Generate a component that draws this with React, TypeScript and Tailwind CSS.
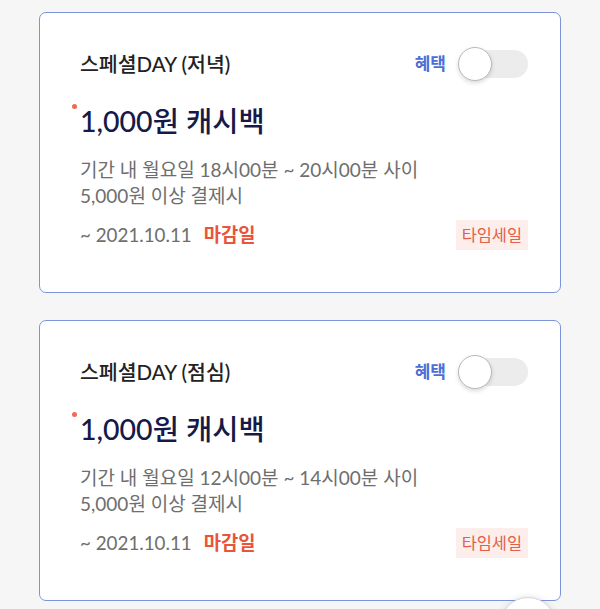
import React, { useState } from 'react';

type Offer = {
  id: string;
  title: string;
  amount: string;
  period: string;
  condition: string;
  until: string;
};

const OFFERS: Offer[] = [
  { id: 'dinner', title: '스페셜DAY (저녁)', amount: '1,000원 캐시백', period: '기간 내 월요일 18시00분 ~ 20시00분 사이', condition: '5,000원 이상 결제시', until: '~ 2021.10.11' },
  { id: 'lunch', title: '스페셜DAY (점심)', amount: '1,000원 캐시백', period: '기간 내 월요일 12시00분 ~ 14시00분 사이', condition: '5,000원 이상 결제시', until: '~ 2021.10.11' },
];

const FONT = { fontFamily: "Lato, 'Noto Sans CJK KR', sans-serif" };

const Toggle = ({ on, onClick }: { on: boolean; onClick: () => void }) => (
  <button onClick={onClick} className="relative w-[70px] h-[34px] shrink-0">
    <span className={`absolute left-[4px] right-0 top-[3px] h-[28px] rounded-full ${on ? 'bg-[#7b95dd]' : 'bg-[#ececec]'}`}></span>
    <span
      className={`absolute top-0 h-[34px] w-[34px] rounded-full bg-white border border-[#b9b9b9] shadow-[0_2px_4px_rgba(0,0,0,0.15)] transition-all ${on ? 'left-[36px]' : 'left-0'}`}
    ></span>
  </button>
);

const OfferCard = ({ offer }: { offer: Offer }) => {
  const [on, setOn] = useState(false);
  return (
    <div className="bg-white border-[1.5px] border-[#7b95dd] rounded-[7px] pl-[40px] pr-[32px] pt-[34px] pb-[42px]">
      <div className="flex items-center justify-between h-[34px]">
        <span className="text-[20.5px] font-medium text-[#222]">{offer.title}</span>
        <div className="flex items-center gap-[12px]">
          <span className="text-[17px] font-semibold text-[#4a6fd8]">혜택</span>
          <Toggle on={on} onClick={() => setOn(!on)} />
        </div>
      </div>
      <div className="relative mt-[22px] h-[36px] flex items-center">
        <span className="absolute left-[-8px] top-[1px] h-[5px] w-[5px] rounded-full bg-[#f06a55]"></span>
        <span className="text-[28.5px] font-medium text-[#151a48] leading-none">{offer.amount}</span>
      </div>
      <div className="mt-[18px] text-[19px] leading-[26px] text-[#6e6e6e]">
        <p>{offer.period}</p>
        <p>{offer.condition}</p>
      </div>
      <div className="mt-[11px] flex items-center justify-between h-[30px]">
        <div className="flex items-center gap-[12px] text-[18.8px]">
          <span className="text-[#6e6e6e]">{offer.until}</span>
          <span className="font-bold text-[#e8553a]">마감일</span>
        </div>
        <span className="h-[30px] px-[6px] flex items-center bg-[#fdeeec] text-[#e0604a] text-[16.4px]">타임세일</span>
      </div>
    </div>
  );
};

const App: React.FC = () => {
  return (
    <div className="relative h-screen bg-[#f6f6f6] overflow-hidden" style={FONT}>
      <div className="flex flex-col gap-[27px] px-[39px] pt-[12px]">
        {OFFERS.map(o => (
          <OfferCard key={o.id} offer={o} />
        ))}
      </div>
      {/* floating button peeking in at the bottom */}
      <div className="absolute left-[500px] top-[597px] h-[56px] w-[56px] rounded-full bg-white border border-[#d6d6d6] shadow-[0_0_6px_rgba(0,0,0,0.12)]"></div>
    </div>
  );
};

export default App;
